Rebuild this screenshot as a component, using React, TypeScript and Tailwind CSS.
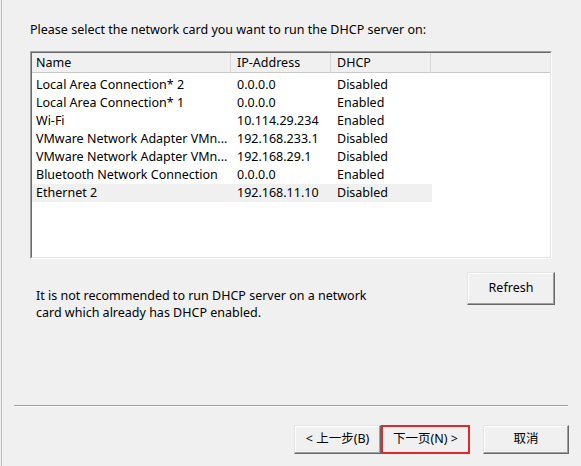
import React from "react";

type Adapter = { name: string; ip: string; dhcp: string };

const adapters: Adapter[] = [
  { name: "Local Area Connection* 2", ip: "0.0.0.0", dhcp: "Disabled" },
  { name: "Local Area Connection* 1", ip: "0.0.0.0", dhcp: "Enabled" },
  { name: "Wi-Fi", ip: "10.114.29.234", dhcp: "Enabled" },
  { name: "VMware Network Adapter VMn...", ip: "192.168.233.1", dhcp: "Disabled" },
  { name: "VMware Network Adapter VMn...", ip: "192.168.29.1", dhcp: "Disabled" },
  { name: "Bluetooth Network Connection", ip: "0.0.0.0", dhcp: "Enabled" },
  { name: "Ethernet 2", ip: "192.168.11.10", dhcp: "Disabled" },
];

const selected = 6;

// classic raised push button
function PushButton({
  children,
  className = "",
  focused = false,
}: {
  children: React.ReactNode;
  className?: string;
  focused?: boolean;
}) {
  return (
    <button
      className={`flex items-center justify-center bg-[#f0f0f0] text-[12.5px] text-black ${
        focused
          ? "border-2 border-[#e5262f]"
          : "border border-t-[#e3e3e3] border-l-[#e3e3e3] border-r-[#696969] border-b-[#696969] shadow-[inset_-1px_-1px_0_#a0a0a0,inset_1px_1px_0_#ffffff]"
      } ${className}`}
    >
      {children}
    </button>
  );
}

export default function App() {
  return (
    <div
      className="w-[581px] h-[466px] overflow-hidden bg-[#f0f0f0] text-black"
      style={{ fontFamily: '"Noto Sans", "Noto Sans CJK SC", sans-serif' }}
    >
      <div className="ml-[1px] h-full border-l border-[#bcbcbc] flex flex-col">
        <p className="ml-[28px] pt-[22px] text-[12.5px] leading-[16px]">
          Please select the network card you want to run the DHCP server on:
        </p>

        {/* adapter list */}
        <div className="mt-[13px] ml-[28px] w-[522px] h-[208px] border border-t-[#a0a0a0] border-l-[#a0a0a0] border-r-white border-b-white">
          <div className="h-full border border-t-[#696969] border-l-[#696969] border-r-[#e3e3e3] border-b-[#e3e3e3] bg-white text-[12.5px]">
            <div className="grid grid-cols-[199px_100px_100px_1fr] h-[20px] bg-[#f0f0f0] border-b border-[#c9c9c9]">
              <div className="pl-[4px] leading-[20px] border-r border-[#d6d6d6]">Name</div>
              <div className="pl-[6px] leading-[20px] border-r border-[#d6d6d6]">IP-Address</div>
              <div className="pl-[6px] leading-[20px] border-r border-[#d6d6d6]">DHCP</div>
              <div />
            </div>
            <div className="pt-[3px]">
              {adapters.map((a, i) => (
                <div
                  key={i}
                  className={`grid grid-cols-[199px_100px_100px] w-[400px] h-[18px] leading-[18px] ${
                    i === selected ? "bg-[#f0f0f0]" : ""
                  }`}
                >
                  <div className="pl-[4px] whitespace-nowrap overflow-hidden">{a.name}</div>
                  <div className="pl-[6px] whitespace-nowrap">{a.ip}</div>
                  <div className="pl-[6px] whitespace-nowrap">{a.dhcp}</div>
                </div>
              ))}
            </div>
          </div>
        </div>

        <div className="flex items-start mt-[13px]">
          <p className="ml-[34px] mt-[15px] text-[12.5px] leading-[17px] w-[380px]">
            It is not recommended to run DHCP server on a network
            <br />
            card which already has DHCP enabled.
          </p>
          <PushButton className="ml-auto mr-[26px] w-[88px] h-[33px]">Refresh</PushButton>
        </div>

        <div className="mt-[84px] ml-[12px] mr-[13px] border-t border-[#a0a0a0] border-b border-b-white" />

        <div className="mt-[18px] flex justify-end mr-[12px]">
          <PushButton className="w-[87px] h-[29px]">&lt; 上一步(B)</PushButton>
          <PushButton focused className="w-[89px] h-[29px]">
            下一页(N) &gt;
          </PushButton>
          <PushButton className="ml-[13px] w-[86px] h-[29px]">取消</PushButton>
        </div>
      </div>
    </div>
  );
}
